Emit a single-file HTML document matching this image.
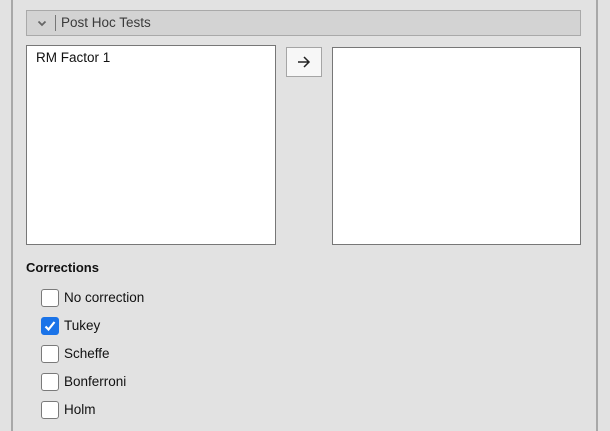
<!DOCTYPE html>
<html><head><style>
body{margin:0;width:610px;height:431px;background:#e2e2e2;font-family:"Liberation Sans",sans-serif;position:relative;overflow:hidden;font-size:13px;color:#111}
.a{position:absolute;box-sizing:border-box}
.cb{position:absolute;left:41px;width:18px;height:18px;box-sizing:border-box;border:1px solid #7a7a7a;border-radius:3px;background:#fff}
.lb{position:absolute;left:64px;font-size:13.5px}
</style></head><body>
<div class="a" style="left:11px;top:0;width:2px;height:431px;background:#a8a8a8"></div>
<div class="a" style="left:596px;top:0;width:2px;height:431px;background:#a8a8a8"></div>
<div class="a" style="left:26px;top:10px;width:555px;height:26px;background:#d3d3d3;border:1px solid #a9a9a9"></div>
<svg class="a" style="left:36px;top:18px" width="12" height="10"><path d="M2.5 3.5 L6 7 L9.5 3.5" stroke="#666" stroke-width="1.8" fill="none"/></svg>
<div class="a" style="left:55px;top:15px;width:1px;height:16px;background:#777"></div>
<div class="a" style="left:61px;top:15px;font-size:13.5px;color:#3a3a3a">Post Hoc Tests</div>
<div class="a" style="left:26px;top:45px;width:250px;height:200px;background:#fff;border:1px solid #777"></div>
<div class="a" style="left:36px;top:50px;font-size:13.5px">RM Factor 1</div>
<div class="a" style="left:286px;top:47px;width:36px;height:30px;background:#f7f7f7;border:1px solid #a5a5a5"></div>
<svg class="a" style="left:296px;top:55px" width="16" height="14"><path d="M2 7 H13 M8 2 L13 7 L8 12" stroke="#222" stroke-width="1.5" fill="none"/></svg>
<div class="a" style="left:332px;top:47px;width:249px;height:198px;background:#fff;border:1px solid #777"></div>
<div class="a" style="left:26px;top:260px;font-weight:bold;font-size:13px">Corrections</div>
<div class="cb" style="top:289px"></div><div class="lb" style="top:290px">No correction</div>
<div class="cb" style="top:317px;background:#1a73e8;border-color:#1a73e8"><svg width="16" height="16" style="position:absolute;left:0;top:0"><path d="M3.5 8.5 L6.5 11.5 L12.5 4" stroke="#fff" stroke-width="2.2" fill="none"/></svg></div><div class="lb" style="top:318px">Tukey</div>
<div class="cb" style="top:345px"></div><div class="lb" style="top:346px">Scheffe</div>
<div class="cb" style="top:373px"></div><div class="lb" style="top:374px">Bonferroni</div>
<div class="cb" style="top:401px"></div><div class="lb" style="top:402px">Holm</div>
</body></html>
